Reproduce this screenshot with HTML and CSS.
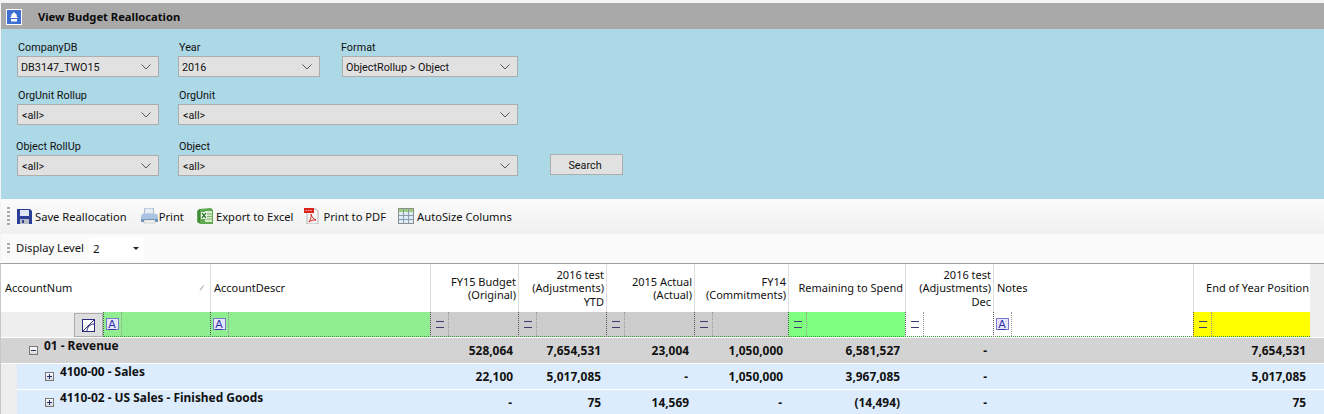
FILE: index.html
```html
<!DOCTYPE html>
<html lang="en">
<head>
<meta charset="utf-8">
<title>View Budget Reallocation</title>
<link rel="stylesheet" href="styles.css">
</head>
<body>
<svg class="defs" width="0" height="0" aria-hidden="true">
  <symbol id="chev" viewBox="0 0 10 6"><path d="M.5.5 5 5 9.500.5" fill="none" stroke="#555" stroke-width="1"/></symbol>
</svg>
<header class="titlebar">
  <svg class="collapse" width="16" height="16" viewBox="0 0 16 16"><rect x=".5" y=".5" width="15" height="15" fill="#3b6fd4" stroke="#fff"/><path d="M8 3 4.500 6.500H6L4 9h8l-2-2.500h1.500z M5 10h6v2.500H5z" fill="#fff"/></svg>
  <h1 class="title">View Budget Reallocation</h1>
</header>

<form class="filters">
  <div class="field"><label class="lbl">CompanyDB</label><div class="sel"><span>DB3147_TWO15</span><svg class="chev"><use href="#chev"/></svg></div></div>
  <div class="field"><label class="lbl">Year</label><div class="sel"><span>2016</span><svg class="chev"><use href="#chev"/></svg></div></div>
  <div class="field shift"><label class="lbl">Format</label><div class="sel"><span>ObjectRollup &gt; Object</span><svg class="chev"><use href="#chev"/></svg></div></div>
  <div class="spacer"></div>

  <div class="field"><label class="lbl">OrgUnit Rollup</label><div class="sel"><span class="all">&lt;all&gt;</span><svg class="chev"><use href="#chev"/></svg></div></div>
  <div class="field wide"><label class="lbl">OrgUnit</label><div class="sel"><span class="all">&lt;all&gt;</span><svg class="chev"><use href="#chev"/></svg></div></div>
  <div class="spacer"></div>

  <div class="field"><label class="lbl out">Object RollUp</label><div class="sel"><span class="all">&lt;all&gt;</span><svg class="chev"><use href="#chev"/></svg></div></div>
  <div class="field wide"><label class="lbl">Object</label><div class="sel"><span class="all">&lt;all&gt;</span><svg class="chev"><use href="#chev"/></svg></div></div>
  <button class="search" type="button">Search</button>
</form>

<nav class="toolbar">
  <span class="grip"></span>
  <a class="tool t-save"><svg width="15" height="15" viewBox="0 0 15 15"><path d="M0 0h13l2 2v13H0z" fill="#2c3f96"/><rect x="3" y="1" width="9" height="6" fill="#dfe6f7"/><rect x="3" y="10" width="9" height="5" fill="#b9bcc6"/><rect x="5" y="11" width="2" height="3" fill="#2c3f96"/></svg>Save Reallocation</a>
  <a class="tool t-print"><svg width="17" height="16" viewBox="0 0 17 16"><path d="M4 0h8l1 6H3z" fill="#e8eef6" stroke="#9fb4cc"/><path d="M1 6h15l1 2v5H0V8z" fill="#a9c4e2"/><rect x="0" y="11" width="17" height="3" fill="#6f93bd"/><rect x="3" y="12" width="11" height="3" fill="#f3f3f3" stroke="#b0b0b0" stroke-width=".5"/></svg>Print</a>
  <a class="tool t-excel"><svg width="16" height="16" viewBox="0 0 16 16"><path d="M2 1 14 0 16 2V16L3 16 0 14V3z" fill="#5fa850"/><path d="M1 3 3 1V15L1 14z" fill="#3f8a38"/><rect x="8" y="3" width="7" height="11" fill="#d6eacb"/><path d="M8 6h7M8 8.500h7M8 11h7" stroke="#7fb56f"/><rect x="4" y="4" width="6" height="7" fill="#f6fbf2"/><path d="M5 5 9 10M9 5 5 10" stroke="#2d7a2d" stroke-width="1.300"/></svg>Export to Excel</a>
  <a class="tool t-pdf"><svg width="16" height="16" viewBox="0 0 16 16"><path d="M3 1h9l2 2v13H3z" fill="#f6f6f6" stroke="#b5b5b5"/><rect x="0" y="0" width="10" height="5" fill="#d9231c"/><path d="M1.500 2.500h7" stroke="#f6b0ac" stroke-dasharray="1.500 1"/><path d="M5 14C8 9 7 7 7 6c1 3 2 5 5 6-3-.2-5 .5-7 2z" fill="none" stroke="#d9231c"/></svg>Print to PDF</a>
  <a class="tool t-size"><svg width="16" height="16" viewBox="0 0 16 16"><rect x=".5" y=".5" width="15" height="15" fill="#dcecfb" stroke="#8e8e8e"/><rect x="1" y="1" width="14" height="3" fill="#9ccf7a"/><path d="M5.500 1v14M10.500 1v14M1 7.500h14M1 11.500h14" stroke="#8e9aa6"/></svg>AutoSize Columns</a>
</nav>

<div class="levelbar">
  <span class="grip short"></span>
  <span class="level-lbl">Display Level</span>
  <div class="level-input"><span>2</span><i class="caret"></i></div>
</div>

<section class="grid">
  <div class="g-row g-head">
    <div class="hc left first">AccountNum<svg class="sort" width="6" height="6" viewBox="0 0 6 6"><path d="M1 5.500 4.500.5" stroke="#999"/></svg></div>
    <div class="hc left">AccountDescr</div>
    <div class="hc">FY15 Budget<br>(Original)</div>
    <div class="hc">2016 test<br>(Adjustments)<br>YTD</div>
    <div class="hc">2015 Actual<br>(Actual)</div>
    <div class="hc">FY14<br>(Commitments)</div>
    <div class="hc">Remaining to Spend</div>
    <div class="hc">2016 test<br>(Adjustments)<br>Dec</div>
    <div class="hc left">Notes</div>
    <div class="hc">End of Year Position</div>
    <div class="hc-rest"></div>
  </div>

  <div class="g-row g-filter">
    <div class="fc-first">
      <span class="fc-btnzone"><span class="fbtn"><svg width="13" height="13" viewBox="0 0 13 13"><rect x=".5" y=".5" width="12" height="12" fill="#fff" stroke="#2b2b80"/><path d="M1 12 12 1M5 12C5 8 8 5 12 5" fill="none" stroke="#2b2b80"/></svg></span></span>
      <div class="fc green"><span class="op"><b class="a">A</b></span></div>
    </div>
    <div class="fc green"><span class="op"><b class="a">A</b></span></div>
    <div class="fc grey"><span class="op eq"></span></div>
    <div class="fc grey"><span class="op eq"></span></div>
    <div class="fc grey"><span class="op eq"></span></div>
    <div class="fc grey"><span class="op eq"></span></div>
    <div class="fc lime"><span class="op eq"></span></div>
    <div class="fc white"><span class="op eq"></span></div>
    <div class="fc white"><span class="op"><b class="a">A</b></span></div>
    <div class="fc yellow"><span class="op eq"></span></div>
    <div class="fc-rest"></div>
  </div>

  <div class="g-row d-row lvl1">
    <div class="dc name"><i class="exp minus"></i><span class="nm">01 - Revenue</span></div>
    <div class="dc">528,064</div><div class="dc">7,654,531</div><div class="dc">23,004</div><div class="dc">1,050,000</div><div class="dc">6,581,527</div><div class="dc dash">-</div><div class="dc"></div><div class="dc">7,654,531</div><div class="dc"></div>
  </div>
  <div class="g-row d-row lvl2">
    <div class="dc name"><i class="exp plus"></i><span class="nm">4100-00 - Sales</span></div>
    <div class="dc">22,100</div><div class="dc">5,017,085</div><div class="dc dash">-</div><div class="dc">1,050,000</div><div class="dc">3,967,085</div><div class="dc dash">-</div><div class="dc"></div><div class="dc">5,017,085</div><div class="dc"></div>
  </div>
  <div class="g-row d-row lvl2">
    <div class="dc name"><i class="exp plus"></i><span class="nm">4110-02 - US Sales - Finished Goods</span></div>
    <div class="dc dash">-</div><div class="dc">75</div><div class="dc">14,569</div><div class="dc dash">-</div><div class="dc">(14,494)</div><div class="dc dash">-</div><div class="dc"></div><div class="dc">75</div><div class="dc"></div>
  </div>
</section>
</body>
</html>
```

FILE: styles.css
```css
* { box-sizing: border-box; }
html, body { margin: 0; height: 414px; overflow: hidden; }
body {
  padding: 3px 0 0 1px;
  background: #f4f4f4;
  font: 11px/13px "Noto Sans", Tahoma, sans-serif;
  color: #111;
}
.defs { position: absolute; }

/* title bar */
.titlebar { height: 26px; background: #a9a9a9; display: flex; align-items: center; padding-left: 5px; }
.collapse { display: block; margin-top: 1px; }
.title { margin: 0 0 0 16px; font: bold 11.200px/13px "Noto Sans", sans-serif; color: #0b0b0b; }

/* filter form */
.filters {
  height: 170px;
  background: #add8e6;
  padding: 11px 0 0 16px;
  display: grid;
  grid-template-columns: 142px 142px 179px 105px;
  grid-template-rows: 37px 40px 49px;
  column-gap: 19px;
  row-gap: 11px;
  align-items: start;
  font: 10.800px/13px Roboto, sans-serif;
}
.field { display: flex; flex-direction: column; }
.shift { margin-left: 3px; }
.shift .lbl { margin-left: -2px; }
.wide { grid-column: span 2; }
.lbl { height: 16px; line-height: 16px; padding-left: 1px; }
.lbl.out { margin-left: -2px; }
.sel {
  height: 21px;
  background: #e1e1e1;
  border: 1px solid #adadad;
  display: flex; align-items: center; justify-content: space-between;
  padding: 1px 7px 0 3px;
}
.all { padding-left: 1px; }
.chev { width: 10px; height: 6px; }
.spacer { height: 1px; }
.search {
  height: 21px; width: 73px; margin: 15px 0 0 13px;
  justify-self: start;
  background: #e1e1e1; border: 1px solid #adadad; padding: 2px 3px 0 0;
  font: inherit; color: #111;
}

/* toolbars */
.toolbar {
  height: 35px;
  background: linear-gradient(#fbfbfb, #f0f0f0);
  display: flex; align-items: center;
  padding: 0 0 1px 6px;
  font-size: 11.200px;
}
.grip { width: 3px; height: 18px; margin-right: 7px; flex: none;
  background: repeating-linear-gradient(#a8a8a8 0 2px, transparent 2px 4px); }
.grip.short { height: 12px; margin-right: 6px; }
.tool { display: flex; align-items: center; gap: 3px; margin-right: 12px; white-space: nowrap; }
.tool svg { display: block; flex: none; }
.t-print { margin-left: 2px; margin-right: 13px; gap: 1px; }
.t-excel { margin-right: 11px; }
.levelbar { height: 29px; background: #fafafa; display: flex; align-items: center; padding-left: 6px; }
.level-lbl { margin: -2px 5px 0 0; font-size: 11.200px; }
.level-input { width: 55px; height: 24px; background: #fff; display: flex; align-items: center; justify-content: space-between; padding: 0 5px 0 4px; font-size: 11.500px; }
.caret { width: 0; height: 0; border: 3px solid transparent; border-top-color: #222; border-bottom: 0; }

/* data grid */
.grid {
  height: 151px;
  margin-left: -1px;
  border-top: 1px solid #a0a0a0;
  border-left: 1px solid #c8c8c8;
  background: #eee;
}
.g-row { display: grid; grid-template-columns: 210px 220px 88px 88px 88px 94px 117px 88px 200px 116px 1fr; }
.g-head { height: 48px; background: #fff; }
.hc {
  border-right: 1px solid #dedede;
  display: flex; align-items: center; justify-content: flex-end; text-align: right;
  padding-right: 2px; line-height: 13.500px; white-space: nowrap;
}
.hc.left { justify-content: flex-start; text-align: left; padding-left: 3px; }
.hc.first { position: relative; padding-left: 4px; }
.hc:nth-child(10) { border-right: 0; padding-right: 1px; }
.sort { position: absolute; right: 5px; top: 21px; }
.hc-rest { background: #eee; }

.g-filter { height: 26px; border-bottom: 1px solid #fff; }
.fc-first { display: grid; grid-template-columns: 103px 1fr; }
.fc-btnzone { background: #eee; display: flex; justify-content: flex-end; padding-top: 1px; }
.fbtn { width: 29px; height: 24px; margin-right: 1px; background: #dedede; border: 1px solid #adadad; display: flex; align-items: center; justify-content: center; }
.fc { display: flex; margin-left: -1px; border-left: 1px dotted #555; border-bottom: 1px dotted #2e9a2e; }
.fc.green { background: #90ee90; }
.fc.grey { background: #ccc; }
.fc.lime { background: #80ff80; }
.fc.white { background: #fff; }
.fc.yellow { background: #ff0; }
.fc-rest { background: #eee; }
.op {
  width: 18px; height: 100%;
  border-right: 1px dotted #999;
  display: flex; align-items: center; justify-content: center;
}
.eq::before { content: ""; width: 8px; height: 5px; border-top: 1px solid #3c3c70; border-bottom: 1px solid #3c3c70; }
.a {
  width: 13px; height: 12px; margin-left: -1px;
  background: #e6e6fa; border: 1px solid #7a7ac8;
  font: 11px/11px "DejaVu Sans", sans-serif; color: #3333aa; text-align: center;
  text-decoration: underline;
}

.d-row { height: 26px; border-bottom: 1px solid #fff; font: bold 11.900px/13px "Noto Sans", sans-serif; color: #111; }
.lvl1 { background: #d3d3d3; grid-template-columns: 430px 88px 88px 88px 94px 117px 88px 200px 116px 1fr; }
.lvl2 { background: #dcecfd; margin-left: 16px; grid-template-columns: 414px 88px 88px 88px 94px 117px 88px 200px 116px 1fr; }
.dc { display: flex; align-items: center; justify-content: flex-end; padding: 0 6px 0 0; white-space: nowrap; }
.dc:nth-child(9) { padding-right: 4px; }
.dc.dash { padding-right: 7px; }
.name { justify-content: flex-start; align-items: flex-start; padding-top: 1px; }
.lvl1 .name { padding-left: 28px; }
.lvl2 .name { padding-left: 28px; }
.nm { margin-left: 6px; }
.exp {
  width: 9px; height: 9px; margin-top: 7px; flex: none;
  border: 1px solid #777; background: linear-gradient(#fdfdfd, #d8d8d8);
  position: relative;
}
.exp::before { content: ""; position: absolute; left: 1px; right: 1px; top: 3px; height: 1px; background: #24306e; }
.plus::after { content: ""; position: absolute; top: 1px; bottom: 1px; left: 3px; width: 1px; background: #24306e; }
```
